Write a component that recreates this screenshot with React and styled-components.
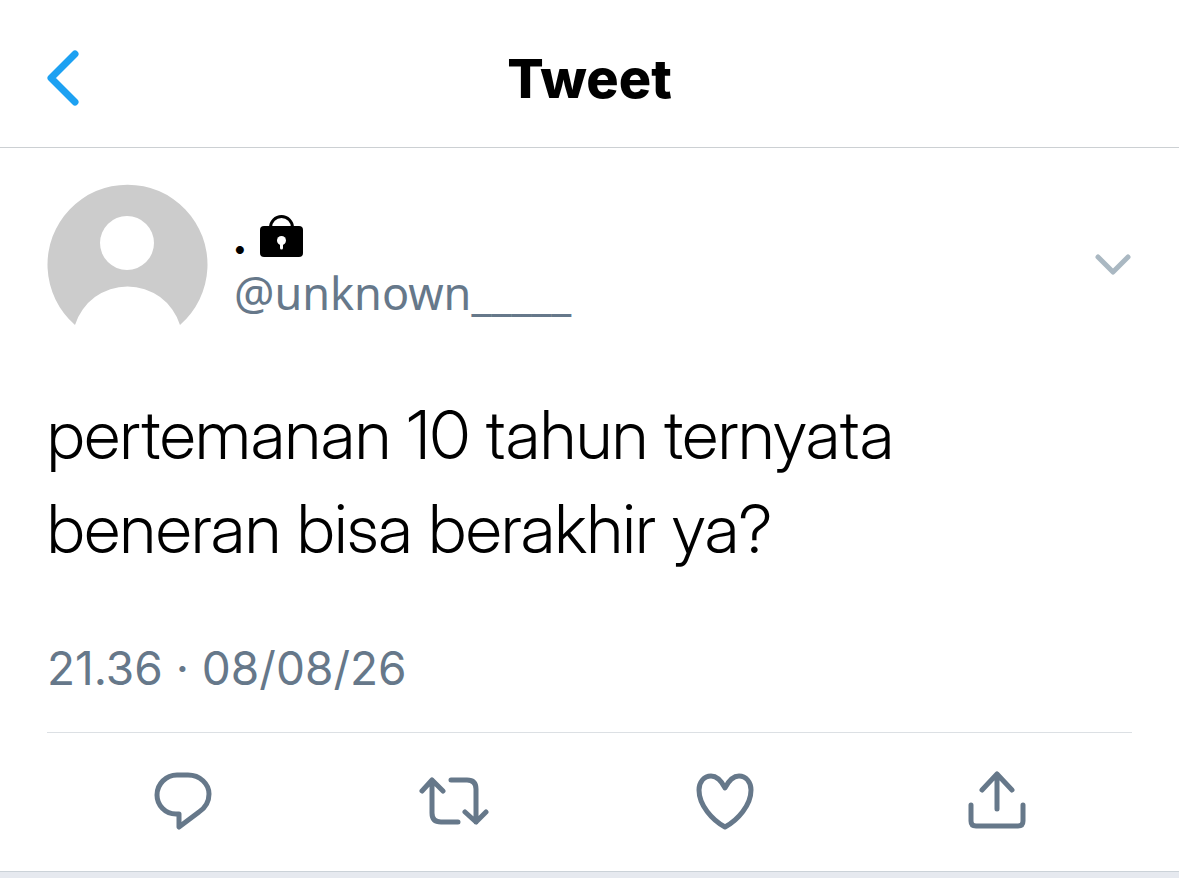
import React from "react";
import styled, { createGlobalStyle } from "styled-components";

const Global = createGlobalStyle`
  * { box-sizing: border-box; }
  body { margin: 0; background: #e6e9ef; font-family: Inter, sans-serif; color: #000; }
`;
const Page = styled.main`
  background: #fff;
  border-bottom: 1px solid #cbd2d8;
`;
const Header = styled.header`
  display: grid;
  grid-template-columns: 120px 1fr 120px;
  align-items: center;
  height: 148px;
  padding: 8px 47px 0;
  border-bottom: 1px solid #ccd0d3;
`;
const Title = styled.h1`
  margin: 0;
  padding-top: 2px;
  text-align: center;
  font-size: 54px;
  line-height: 64px;
  font-weight: 800;
`;
const IconButton = styled.button`
  display: flex;
  justify-self: ${(p) => p.$align || "center"};
  padding: 0;
  border: 0;
  background: none;
  color: ${(p) => p.$color || "#66788a"};
  cursor: pointer;
`;
const Icon = styled.svg`
  display: block;
  fill: none;
  stroke: currentColor;
  stroke-width: ${(p) => p.$stroke || 5};
  stroke-linecap: round;
  stroke-linejoin: round;
`;
const Body = styled.article`
  padding: 36px 47px 0;
`;
const Author = styled.div`
  display: flex;
  align-items: center;
`;
const Avatar = styled.svg`
  flex: none;
  display: block;
`;
const Names = styled.div`
  flex: 1;
  padding-left: 26px;
`;
const Name = styled.div`
  display: flex;
  align-items: center;
  gap: 14px;
  height: 56px;
  font-family: "Inter Display", Inter, sans-serif;
  font-size: 48px;
  font-weight: 700;
`;
const Handle = styled.div`
  font-family: "Noto Sans", sans-serif;
  font-size: 45px;
  line-height: 56px;
  color: #66788a;
`;
const Text = styled.p`
  margin: 43px 0 0;
  max-width: 960px;
  font-family: "Inter Display", Inter, sans-serif;
  font-size: 67px;
  line-height: 94px;
  font-weight: 300;
`;
const Time = styled.time`
  display: block;
  margin-top: 60px;
  font-size: 46px;
  line-height: 64px;
  color: #66788a;
`;
const Actions = styled.div`
  display: grid;
  grid-template-columns: repeat(4, 1fr);
  align-items: center;
  height: 139px;
  margin-top: 32px;
  padding-bottom: 3px;
  border-top: 1px solid #dce0e4;
`;

const actions = [
  { label: "Reply", d: "M23 4H34C46 4 55 13 55 23C55 31 51 37 45 41L25 56V43H22C11 43 3 34 3 24C3 13 12 4 23 4Z", width: 58 },
  { label: "Retweet", d: "M3 20 13 9 24 20M13 9V42Q13 51 22 51H39M32 9H48Q57 9 57 18V51M46 41 57 51 67 41", width: 70 },
  { label: "Like", d: "M29 17C25 9 21 5 15 5C8 5 3 11 3 19C3 34 16 49 29 56C42 49 55 34 55 19C55 11 50 5 43 5C37 5 33 9 29 17Z", width: 58 },
  { label: "Share", d: "M31 38V3M16 19 31 3 46 19M5 34V50Q5 55 10 55H52Q57 55 57 50V34", width: 60 },
];

export default function App() {
  return (
    <>
      <Global />
      <Page>
        <Header>
          <IconButton $align="start" $color="#1da1f2" aria-label="Back">
            <Icon width="33" height="58" viewBox="0 0 33 58" $stroke={7}>
              <path d="M28 5 4 29 28 53" />
            </Icon>
          </IconButton>
          <Title>Tweet</Title>
        </Header>
        <Body>
          <Author>
            <Avatar width="161" height="161" viewBox="0 0 161 161" role="img" aria-label="Profile picture">
              <path fill="#ccc" d="M28 141A80 80 0 1 1 133 141A55 55 0 0 0 28 141Z" />
              <circle cx="80" cy="59" r="27" fill="#fff" />
            </Avatar>
            <Names>
              <Name>
                <span>.</span>
                <svg width="43" height="43" viewBox="0 0 43 43" role="img" aria-label="Protected account">
                  <path d="M10.500 14V12.500a11 11 0 0 1 22 0V14" fill="none" stroke="#000" strokeWidth="3" />
                  <rect y="11" width="43" height="31" rx="4" />
                  <circle cx="21.500" cy="25.500" r="4.500" fill="#fff" />
                  <path d="M21.500 27V33" stroke="#fff" strokeWidth="3" strokeLinecap="round" />
                </svg>
              </Name>
              <Handle>@unknown_____</Handle>
            </Names>
            <IconButton $color="#aab8c2" aria-label="More">
              <Icon width="38" height="22" viewBox="0 0 38 22">
                <path d="M4 3 19 18 34 3" />
              </Icon>
            </IconButton>
          </Author>
          <Text>pertemanan 10 tahun ternyata beneran bisa berakhir ya?</Text>
          <Time>21.36 · 08/08/26</Time>
          <Actions>
            {actions.map((a) => (
              <IconButton key={a.label} aria-label={a.label}>
                <Icon width={a.width} height="60" viewBox={`0 0 ${a.width} 60`}>
                  <path d={a.d} />
                </Icon>
              </IconButton>
            ))}
          </Actions>
        </Body>
      </Page>
    </>
  );
}
